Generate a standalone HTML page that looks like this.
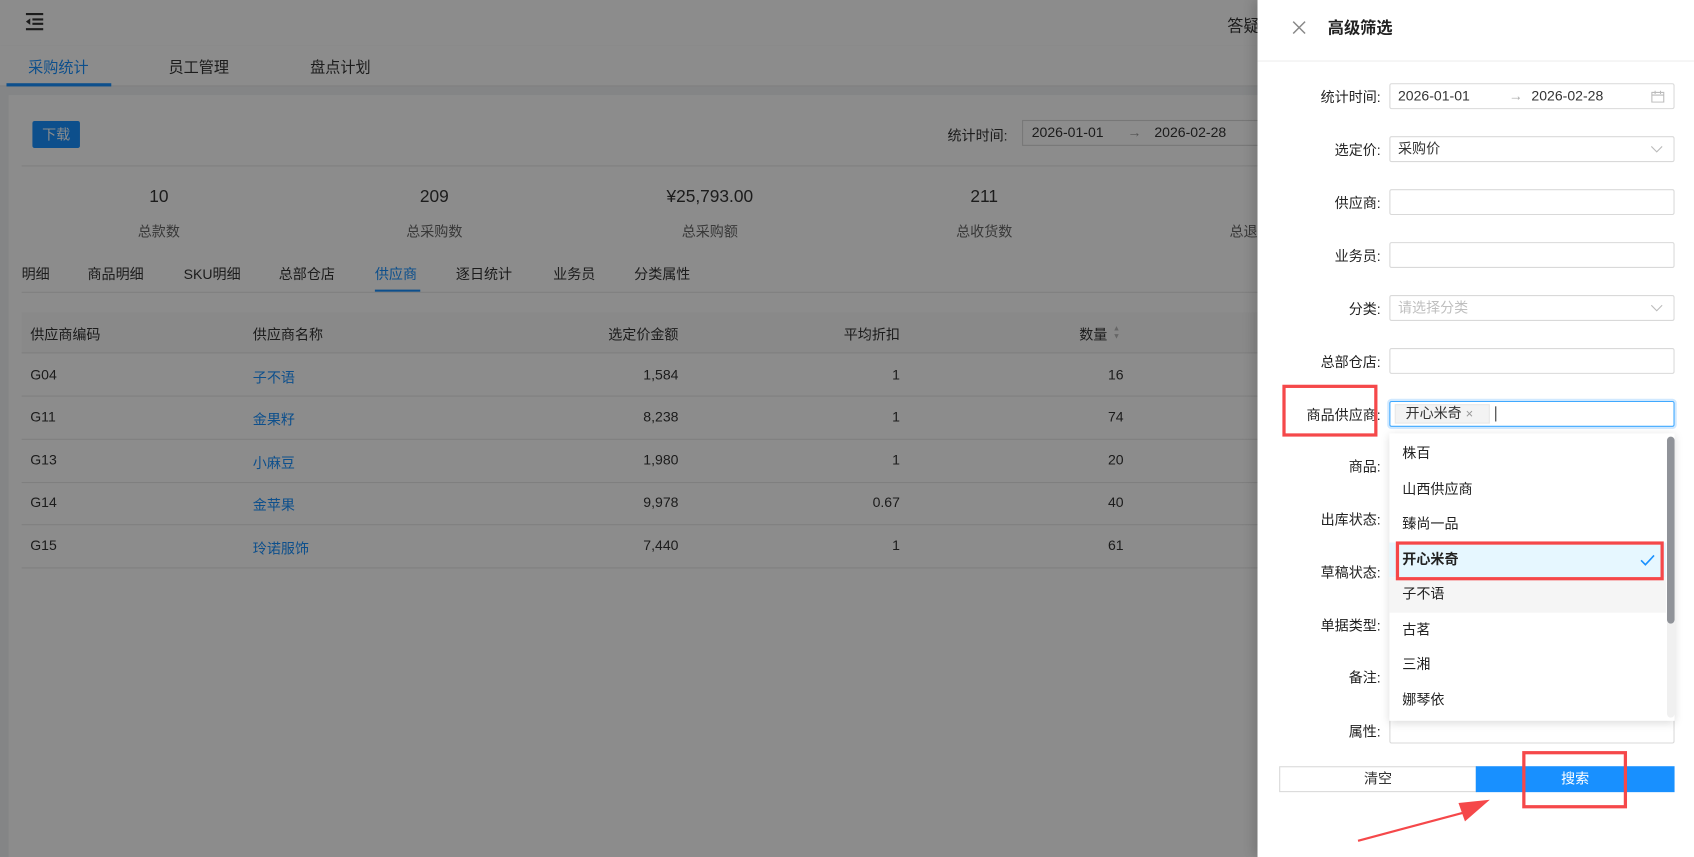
<!DOCTYPE html>
<html><head><meta charset="utf-8"><style>
*{box-sizing:border-box;margin:0;padding:0}
html,body{width:1694px;height:857px;overflow:hidden;background:#fff}
body{font-family:"Liberation Sans","Noto Sans CJK SC",sans-serif;color:#333;font-size:13px}
#w{position:absolute;left:0;top:0;width:1568px;height:793px;transform:scale(1.08036,1.0807);transform-origin:0 0;background:#f0f2f5;overflow:hidden}
.a{position:absolute;white-space:nowrap}
.mask{position:absolute;left:0;top:0;width:1164px;height:793px;background:rgba(0,0,0,0.45)}
.lbl{position:absolute;right:290px;font-size:13px;color:#222;transform:translateY(-50%)}
.inp{position:absolute;left:1286px;width:264px;height:24px;border:1px solid #d9d9d9;border-radius:2px;background:#fff;transform:translateY(-50%)}
.it{position:absolute;left:0;width:256px;height:32.5px;line-height:32.5px;padding-left:12px;font-size:13px;color:#222}
</style></head><body><div id="w">
<div class="a" style="left:0;top:0;width:1568px;height:42px;background:#fff;box-shadow:0 1px 4px rgba(0,0,0,.1)"></div>
<svg class="a" style="left:22px;top:11px" width="20" height="18" viewBox="0 0 20 18"><path d="M2 2h16M8 7h10M8 11h10M2 16h16" stroke="#333" stroke-width="2"/><path d="M2 9l4-3v6z" fill="#333"/></svg>
<div class="a" style="left:1136px;top:13px;font-size:15px">答疑</div>
<div class="a" style="left:0;top:42px;width:1568px;height:38px;background:#fff;border-bottom:1px solid #e8e8e8"></div>
<div class="a" style="left:26px;top:52px;font-size:14px;color:#1890ff">采购统计</div>
<div class="a" style="left:6px;top:77px;width:97px;height:3px;background:#1890ff"></div>
<div class="a" style="left:156px;top:52px;font-size:14px">员工管理</div>
<div class="a" style="left:287px;top:52px;font-size:14px">盘点计划</div>
<div class="a" style="left:8px;top:88px;width:1560px;height:705px;background:#fff"></div>
<div class="a" style="left:30px;top:112px;width:44px;height:25px;background:#1890ff;color:#fff;border-radius:2px;text-align:center;line-height:25px;font-size:13px">下载</div>
<div class="a" style="left:877px;top:115px;font-size:13px">统计时间:</div>
<div class="a" style="left:946px;top:111px;width:260px;height:24px;border:1px solid #d9d9d9;padding-left:8px;line-height:22px">2026-01-01<span style="margin-left:22px;color:#999">→</span><span style="margin-left:12px">2026-02-28</span></div>
<div class="a" style="left:20px;top:153px;width:1548px;height:1px;background:#e8e8e8"></div>
<div class="a" style="left:147px;top:174px;transform:translateX(-50%);font-size:16px">10</div>
<div class="a" style="left:147px;top:204px;transform:translateX(-50%);color:#666">总款数</div>
<div class="a" style="left:402px;top:174px;transform:translateX(-50%);font-size:16px">209</div>
<div class="a" style="left:402px;top:204px;transform:translateX(-50%);color:#666">总采购数</div>
<div class="a" style="left:657px;top:174px;transform:translateX(-50%);font-size:16px">¥25,793.00</div>
<div class="a" style="left:657px;top:204px;transform:translateX(-50%);color:#666">总采购额</div>
<div class="a" style="left:911px;top:174px;transform:translateX(-50%);font-size:16px">211</div>
<div class="a" style="left:911px;top:204px;transform:translateX(-50%);color:#666">总收货数</div>
<div class="a" style="left:1138px;top:204px;color:#666">总退</div>
<div class="a" style="left:20px;top:243px">明细</div>
<div class="a" style="left:81px;top:243px">商品明细</div>
<div class="a" style="left:170px;top:243px">SKU明细</div>
<div class="a" style="left:258px;top:243px">总部仓店</div>
<div class="a" style="left:347px;top:243px;color:#1890ff">供应商</div>
<div class="a" style="left:347px;top:268px;width:42px;height:2px;background:#1890ff"></div>
<div class="a" style="left:422px;top:243px">逐日统计</div>
<div class="a" style="left:512px;top:243px">业务员</div>
<div class="a" style="left:587px;top:243px">分类属性</div>
<div class="a" style="left:20px;top:270px;width:1548px;height:1px;background:#e8e8e8"></div>
<div class="a" style="left:20px;top:289px;width:1548px;height:38px;background:#fafafa;border-bottom:1px solid #e8e8e8"></div>
<div class="a" style="left:28px;top:299px">供应商编码</div>
<div class="a" style="left:234px;top:299px">供应商名称</div>
<div class="a" style="right:940px;top:299px">选定价金额</div>
<div class="a" style="right:735px;top:299px">平均折扣</div>
<div class="a" style="right:543px;top:299px">数量</div>
<div class="a" style="left:1030px;top:301px;font-size:7px;line-height:7px;color:#bbb">▲<br>▼</div>
<div class="a" style="left:20px;top:366px;width:1548px;height:1px;background:#e8e8e8"></div>
<div class="a" style="left:20px;top:406px;width:1548px;height:1px;background:#e8e8e8"></div>
<div class="a" style="left:20px;top:446px;width:1548px;height:1px;background:#e8e8e8"></div>
<div class="a" style="left:20px;top:485px;width:1548px;height:1px;background:#e8e8e8"></div>
<div class="a" style="left:20px;top:525px;width:1548px;height:1px;background:#e8e8e8"></div>
<div class="a" style="left:28px;top:339px">G04</div><div class="a" style="left:234px;top:339px;color:#1890ff">子不语</div><div class="a" style="right:940px;top:339px">1,584</div><div class="a" style="right:735px;top:339px">1</div><div class="a" style="right:528px;top:339px">16</div>
<div class="a" style="left:28px;top:378px">G11</div><div class="a" style="left:234px;top:378px;color:#1890ff">金果籽</div><div class="a" style="right:940px;top:378px">8,238</div><div class="a" style="right:735px;top:378px">1</div><div class="a" style="right:528px;top:378px">74</div>
<div class="a" style="left:28px;top:418px">G13</div><div class="a" style="left:234px;top:418px;color:#1890ff">小麻豆</div><div class="a" style="right:940px;top:418px">1,980</div><div class="a" style="right:735px;top:418px">1</div><div class="a" style="right:528px;top:418px">20</div>
<div class="a" style="left:28px;top:457px">G14</div><div class="a" style="left:234px;top:457px;color:#1890ff">金苹果</div><div class="a" style="right:940px;top:457px">9,978</div><div class="a" style="right:735px;top:457px">0.67</div><div class="a" style="right:528px;top:457px">40</div>
<div class="a" style="left:28px;top:497px">G15</div><div class="a" style="left:234px;top:497px;color:#1890ff">玲诺服饰</div><div class="a" style="right:940px;top:497px">7,440</div><div class="a" style="right:735px;top:497px">1</div><div class="a" style="right:528px;top:497px">61</div>
<div class="mask"></div>
<div class="a" style="left:1164px;top:0;width:404px;height:793px;background:#fff;box-shadow:-4px 0 10px rgba(0,0,0,.15)"></div>
<svg class="a" style="left:1196px;top:19px" width="13" height="13" viewBox="0 0 13 13"><path d="M1 1L12 12M12 1L1 12" stroke="#888" stroke-width="1.4"/></svg>
<div class="a" style="left:1229px;top:15px;font-size:15px;font-weight:bold;color:#222">高级筛选</div>
<div class="a" style="left:1164px;top:56px;width:404px;height:1px;background:#eee"></div>
<div class="lbl" style="top:89px">统计时间:</div>
<div class="inp" style="top:89px;padding-left:7px;line-height:22px">2026-01-01<span style="margin-left:36px;color:#aaa">→</span><span style="margin-left:8px">2026-02-28</span>
<svg style="position:absolute;right:8px;top:5px" width="13" height="12" viewBox="0 0 13 12"><path d="M1 2.5h11v9h-11zM1 5h11M4 1v3M9 1v3" stroke="#bbb" fill="none"/></svg></div>
<div class="lbl" style="top:138px">选定价:</div>
<div class="inp" style="top:138px;padding-left:7px;line-height:22px">采购价<svg style="position:absolute;right:10px;top:8px" width="11" height="7"><path d="M.5.5l5 5 5-5" stroke="#bbb" fill="none"/></svg></div>
<div class="lbl" style="top:187px">供应商:</div><div class="inp" style="top:187px"></div>
<div class="lbl" style="top:236px">业务员:</div><div class="inp" style="top:236px"></div>
<div class="lbl" style="top:285px">分类:</div>
<div class="inp" style="top:285px;padding-left:7px;line-height:22px;color:#bfbfbf">请选择分类<svg style="position:absolute;right:10px;top:8px" width="11" height="7"><path d="M.5.5l5 5 5-5" stroke="#bbb" fill="none"/></svg></div>
<div class="lbl" style="top:334px">总部仓店:</div><div class="inp" style="top:334px"></div>
<div class="lbl" style="top:383px">商品供应商:</div>
<div class="inp" style="top:383px;border-color:#40a9ff;box-shadow:0 0 0 2px rgba(24,144,255,.2)"><div class="a" style="left:4px;top:2px;height:18px;width:88px;background:#f3f3f3;border:1px solid #e8e8e8;padding-left:9px;line-height:16px">开心米奇 <span style="color:#999;font-size:12px">×</span></div><div class="a" style="left:97px;top:4px;width:1px;height:14px;background:#333"></div></div>
<div class="lbl" style="top:431px">商品:</div>
<div class="lbl" style="top:480px">出库状态:</div>
<div class="lbl" style="top:529px">草稿状态:</div>
<div class="lbl" style="top:578px">单据类型:</div>
<div class="lbl" style="top:626px">备注:</div>
<div class="lbl" style="top:676px">属性:</div><div class="inp" style="top:676px"></div>
<div class="a" style="left:1286px;top:401px;width:264px;height:266px;background:#fff;box-shadow:0 2px 8px rgba(0,0,0,.15)">
<div class="it" style="top:3px">株百</div>
<div class="it" style="top:35.5px">山西供应商</div>
<div class="it" style="top:68px">臻尚一品</div>
<div class="it" style="top:100.5px;background:#e6f7ff;font-weight:bold">开心米奇<svg style="position:absolute;right:10px;top:11px" width="14" height="11"><path d="M1 5.5l4 4 8-8.5" stroke="#1890ff" stroke-width="1.5" fill="none"/></svg></div>
<div class="it" style="top:133px;background:#f5f5f5">子不语</div>
<div class="it" style="top:165.5px">古茗</div>
<div class="it" style="top:198px">三湘</div>
<div class="it" style="top:230.5px">娜琴依</div>
<div class="a" style="left:257px;top:3px;width:7px;height:260px;background:#f0f0f0;border-radius:4px"></div>
<div class="a" style="left:257px;top:3px;width:7px;height:173px;background:#909399;border-radius:4px"></div>
</div>
<div class="a" style="left:1184px;top:709px;width:183px;height:24px;border:1px solid #d9d9d9;text-align:center;line-height:22px;background:#fff">清空</div>
<div class="a" style="left:1366px;top:709px;width:184px;height:24px;background:#1890ff;color:#fff;text-align:center;line-height:24px">搜索</div>
<div class="a" style="left:1187px;top:356px;width:88px;height:48px;border:3px solid #f5484a"></div>
<div class="a" style="left:1292px;top:501px;width:248px;height:36px;border:3px solid #f5484a"></div>
<div class="a" style="left:1409px;top:695px;width:97px;height:53px;border:3px solid #f5484a"></div>
<svg class="a" style="left:1250px;top:730px" width="140" height="55"><path d="M7 48L112 20" stroke="#f5484a" stroke-width="2"/><path d="M129 10L100 13L106 30Z" fill="#f5484a"/></svg>
</div></body></html>
